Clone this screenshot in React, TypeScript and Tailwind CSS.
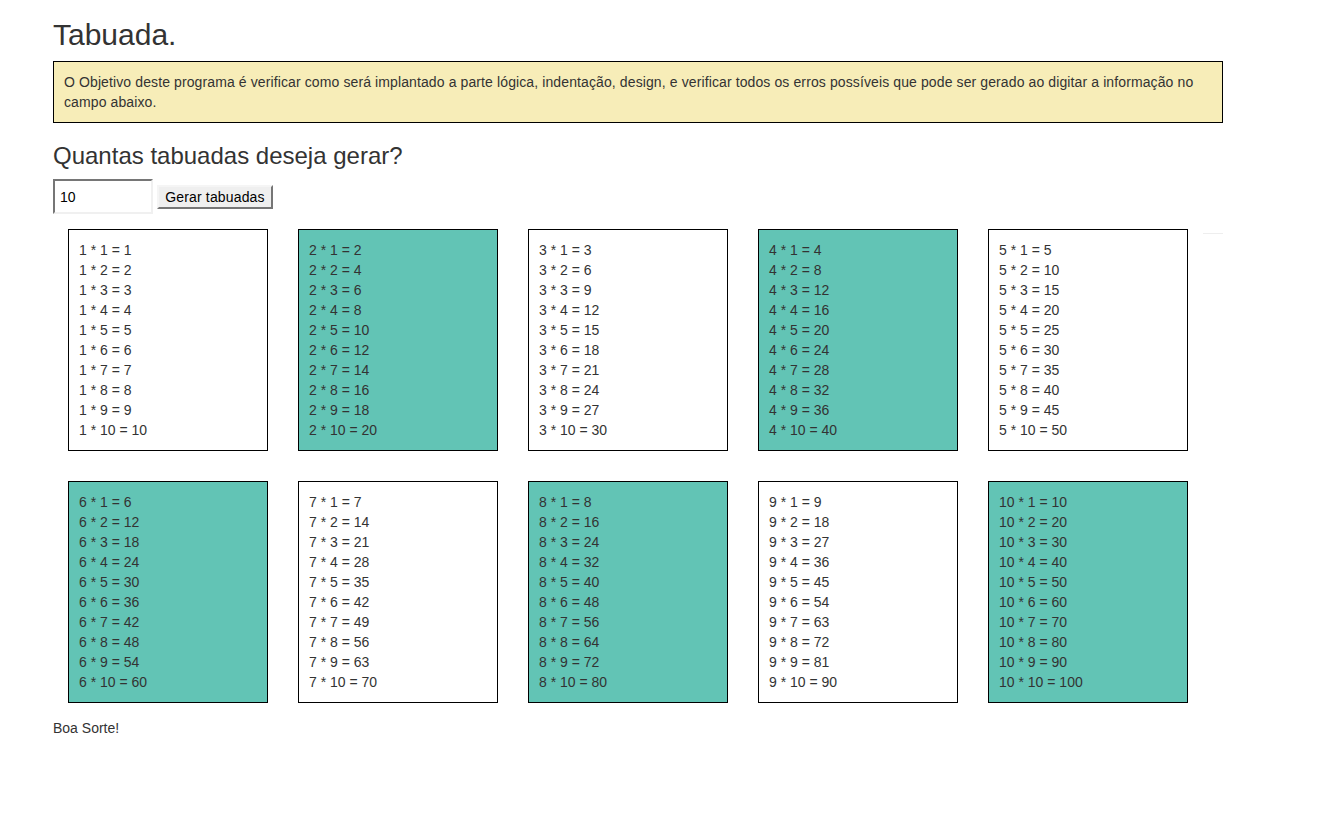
import React from "react";

const nums = [1, 2, 3, 4, 5, 6, 7, 8, 9, 10];

function Card({ n }: { n: number }) {
  const teal = n % 2 === 0;
  return (
    <div
      className={
        "m-[15px] w-[200px] border border-black px-[10px] py-[10px] " +
        (teal ? "bg-[#62c4b5]" : "bg-white")
      }
    >
      {nums.map((i) => (
        <div key={i} className="h-[20px] leading-[20px] whitespace-nowrap">
          {n} * {i} = {n * i}
        </div>
      ))}
    </div>
  );
}

export default function App() {
  return (
    <div className="min-h-[835px] bg-white">
      <div className="ml-[53px] w-[1170px] pt-px font-['Liberation_Sans',Arial,sans-serif] text-[14px] leading-[20px] text-[#333]">
        <h2 className="mt-[17px] mb-[10px] text-[30px] leading-[33px] font-normal">Tabuada.</h2>
        <div className="border border-black bg-[#f7edb8] p-[10px] tracking-[0.11px]">
          O Objetivo deste programa é verificar como será implantado a parte lógica, indentação, design, e verificar todos os erros possíveis que pode ser gerado ao digitar a informação no campo abaixo.
        </div>
        <h3 className="mt-[20px] mb-[10px] text-[24px] leading-[26.4px] font-normal">Quantas tabuadas deseja gerar?</h3>
        <div className="flex items-center gap-[4px]">
          <input
            defaultValue="10"
            className="h-[35px] w-[100px] border-2 border-solid border-t-[#767676] border-l-[#767676] border-r-[#f0f0f0] border-b-[#f0f0f0] bg-white px-[5px] text-[14px] text-black outline-none"
          />
          <button className="h-[24px] w-[116px] border-2 border-solid border-t-[#f5f5f5] border-l-[#f5f5f5] border-r-[#767676] border-b-[#767676] bg-[#efefef] px-0 text-[14px] leading-[18px] tracking-[0.15px] text-black">
            Gerar tabuadas
          </button>
        </div>
        <div className="relative flex flex-wrap">
          {nums.map((n) => (
            <Card key={n} n={n} />
          ))}
          <div className="absolute right-0 top-[19px] h-px w-[20px] bg-[#eeeeee]" />
        </div>
        <p className="leading-[20px]">Boa Sorte!</p>
      </div>
    </div>
  );
}
